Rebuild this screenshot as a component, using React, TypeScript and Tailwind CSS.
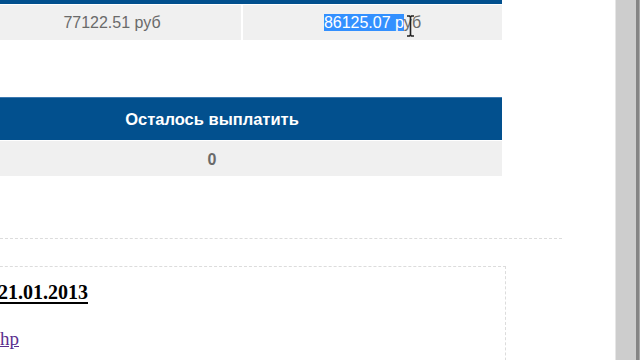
export default function App() {
    return (
        <div className="flex h-[360px] w-[640px] overflow-hidden bg-white font-['Liberation_Sans',Arial,sans-serif]">
            {/* page content, scrolled horizontally so the left edge is cut */}
            <div className="relative h-full w-[615px] overflow-hidden">
                {/* paid amounts table */}
                <div className="-ml-[17px] w-[519px]">
                    <div className="h-[4px] bg-[#02508e]" />
                    <div className="mt-[1px] flex h-[35px] gap-[2px] text-[16px] text-[#6a6a6a]">
                        <div className="flex w-[258px] items-center justify-center bg-[#f0f0f0]">77122.51 руб</div>
                        <div className="relative flex flex-1 items-center justify-center bg-[#f0f0f0]">
                            <span>
                                <span className="bg-[#3390ff] text-white">86125.07 р</span>уб
                            </span>
                            <svg className="absolute left-[163px] top-[10px]" width="9" height="22" viewBox="0 0 9 22">
                                <path d="M1 1h2.5l1 1 1-1H8M4.5 2v18M1 21h2.5l1-1 1 1H8" fill="none" stroke="#222" strokeWidth="1.6" />
                            </svg>
                        </div>
                    </div>
                </div>

                {/* remaining table */}
                <div className="-ml-[78px] mt-[57px] w-[580px]">
                    <div className="flex h-[43px] items-center justify-center border-t border-[#3b78b0] bg-[#02508e] text-[16.5px] font-bold text-white">
                        Осталось выплатить
                    </div>
                    <div className="mt-[1px] flex h-[35px] items-center justify-center bg-[#f0f0f0] pt-[3px] text-[16px] font-bold text-[#6a6a6a]">
                        0
                    </div>
                </div>

                <div className="mt-[62px] w-[562px] border-t border-dashed border-[#dcdcdc]" />

                {/* news block */}
                <div className="-ml-[40px] mt-[27px] h-[120px] w-[546px] border border-dashed border-[#dcdcdc] pt-[10px] font-['Liberation_Serif','Times_New_Roman',serif]">
                    <div className="ml-[37px] text-[20px] font-bold text-black underline underline-offset-[3px]">21.01.2013</div>
                    <div className="ml-[39px] mt-[18px] text-[19px] text-[#5b2f8f] underline">hp</div>
                </div>
            </div>

            {/* scrollbar */}
            <div className="flex h-full flex-1">
                <div className="w-[1px] bg-[#e6e6e6]" />
                <div className="w-[20px] bg-[#cdcdcd]" />
                <div className="w-[3px] bg-[#858585]" />
                <div className="flex-1 bg-[#a9a9a9]" />
            </div>
        </div>
    );
}
